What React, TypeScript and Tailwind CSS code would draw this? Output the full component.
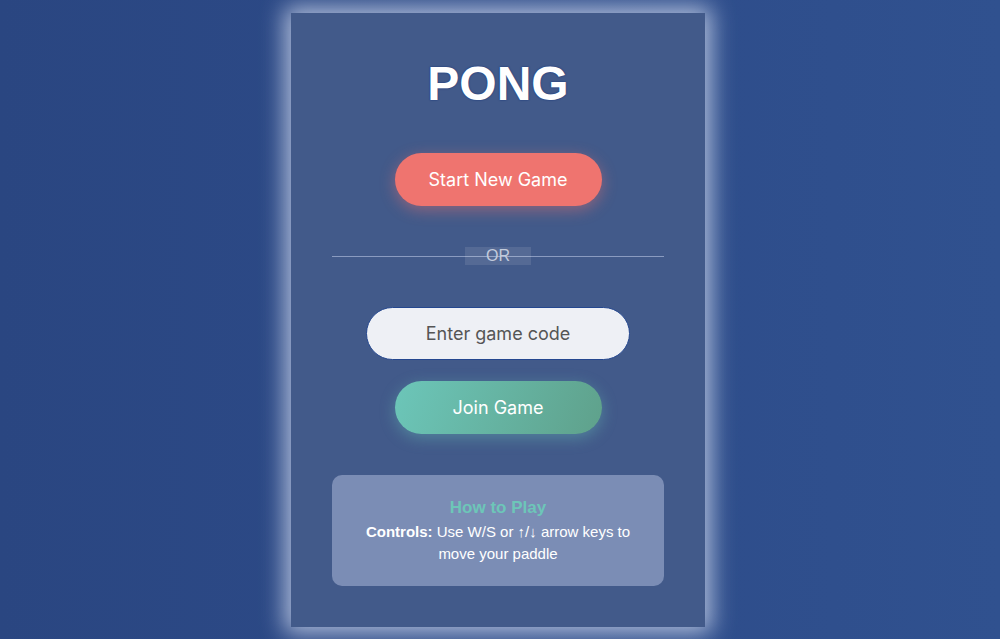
import React from "react";

export default function App() {
  return (
    <div className="min-h-[639px] w-full bg-[linear-gradient(90deg,#2a4681_0%,#2d4b89_50%,#30518f_100%)] pt-[13px] pb-[12px] pr-[4px] flex justify-center font-['Liberation_Sans',Arial,sans-serif]">
      {/* card */}
      <div className="w-[414px] h-[614px] bg-[#425a8a] shadow-[0_0_22px_6px_rgba(220,228,245,0.75)] px-[41px] pt-[43px] pb-[41px] flex flex-col items-center">
        <h1 className="text-[48px] leading-[56px] font-bold text-white [text-shadow:0_0_2px_#1c3a7c,0_0_1px_#1c3a7c]">
          PONG
        </h1>

        <button className="mt-[41px] w-[207px] h-[53px] rounded-full bg-[#ef746f] text-white text-[18px] font-['Inter',sans-serif] shadow-[0_4px_15px_rgba(239,116,111,0.45)]">
          Start New Game
        </button>

        {/* divider */}
        <div className="mt-[41px] w-full h-[18px] relative flex justify-center">
          <div className="absolute left-0 right-0 top-[9px] h-px bg-[#8a9bc0]" />
          <span className="relative w-[66px] h-[18px] bg-[rgba(255,255,255,0.1)] text-[#c3cbdc] text-[16px] leading-[18px] text-center">
            OR
          </span>
        </div>

        <input
          placeholder="Enter game code"
          className="mt-[42px] w-[264px] h-[53px] rounded-full bg-[#eef0f5] border border-[#24478f] text-center text-[18px] font-['Inter',sans-serif] text-[#333] placeholder:text-[#555] outline-none"
        />

        <button className="mt-[21px] w-[207px] h-[53px] rounded-full bg-[linear-gradient(110deg,#6cc6b9_0%,#5fa18b_100%)] text-white text-[18px] font-['Inter',sans-serif] shadow-[0_4px_15px_rgba(108,197,184,0.4)]">
          Join Game
        </button>

        {/* how to play */}
        <div className="mt-[41px] w-full h-[111px] rounded-[10px] bg-[#7b8db5] px-[20px] pt-[22px] text-center">
          <h3 className="text-[17px] leading-[22px] font-bold text-[#6dc6b8]">
            How to Play
          </h3>
          <p className="mt-[2px] text-[15px] leading-[22px] text-white">
            <strong>Controls:</strong> Use W/S or ↑/↓ arrow keys to move your paddle
          </p>
        </div>
      </div>
    </div>
  );
}
